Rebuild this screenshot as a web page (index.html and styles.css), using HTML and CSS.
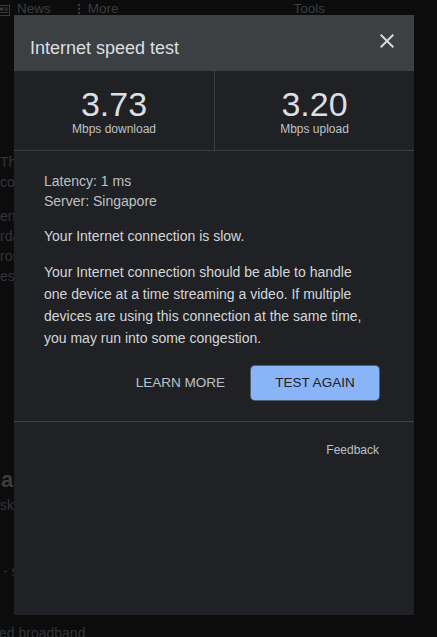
FILE: index.html
```html
<!DOCTYPE html>
<html lang="en">
<head>
<meta charset="utf-8">
<title>Internet speed test</title>
<link rel="stylesheet" href="styles.css">
</head>
<body>
<div class="page">
  <nav class="tabs">
    <span class="tab tab-news">
      <svg class="news-icon" width="12" height="11" viewBox="0 0 12 11"><rect x="0.5" y="0.5" width="11" height="10" fill="none" stroke="#3a3d40"/><rect x="2" y="2.5" width="3" height="3" fill="#3a3d40"/><path d="M6 3h4M6 5h4M2 7.5h8" stroke="#3a3d40"/></svg>
      <span>News</span>
    </span>
    <span class="tab tab-more">
      <svg class="kebab" width="4" height="12" viewBox="0 0 4 12"><circle cx="2" cy="2" r="1.2" fill="#3a3d40"/><circle cx="2" cy="6" r="1.2" fill="#3a3d40"/><circle cx="2" cy="10" r="1.2" fill="#3a3d40"/></svg>
      <span>More</span>
    </span>
    <span class="tab tab-tools">Tools</span>
  </nav>
  <div class="snippets">
    <p class="snip s1">The</p>
    <p class="snip">con</p>
    <p class="snip s2">ens</p>
    <p class="snip">rda</p>
    <p class="snip">ros</p>
    <p class="snip">esm</p>
    <p class="snip snip-title">a</p>
    <p class="snip s3">sk</p>
    <p class="snip s4">- s</p>
    <p class="snip s5">ed broadband</p>
  </div>
</div>

<div class="dialog" role="dialog" aria-label="Internet speed test">
  <header class="dialog-head">
    <h1 class="dialog-title">Internet speed test</h1>
    <button class="close" aria-label="Close">
      <svg width="24" height="24" viewBox="0 0 24 24"><path d="M19 6.41L17.59 5 12 10.59 6.41 5 5 6.41 10.59 12 5 17.59 6.41 19 12 13.41 17.59 19 19 17.59 13.41 12z" fill="#d6d8db"/></svg>
    </button>
  </header>
  <div class="stats">
    <div class="stat">
      <div class="stat-value">3.73</div>
      <div class="stat-label">Mbps download</div>
    </div>
    <div class="stat">
      <div class="stat-value">3.20</div>
      <div class="stat-label">Mbps upload</div>
    </div>
  </div>
  <div class="content">
    <div class="meta">
      <div>Latency: 1 ms</div>
      <div>Server: Singapore</div>
    </div>
    <p class="text">Your Internet connection is slow.</p>
    <p class="text para">Your Internet connection should be able to handle one device at a time streaming a video. If multiple devices are using this connection at the same time, you may run into some congestion.</p>
    <div class="actions">
      <button class="btn btn-text">LEARN MORE</button>
      <button class="btn btn-primary">TEST AGAIN</button>
    </div>
  </div>
  <div class="footer">
    <span class="feedback">Feedback</span>
  </div>
</div>
</body>
</html>
```

FILE: styles.css
```css
html, body {
  margin: 0;
  padding: 0;
}
body {
  background: #0c0c0d;
  width: 437px;
  height: 637px;
  overflow: hidden;
  position: relative;
  font-family: "Liberation Sans", Arial, sans-serif;
}

/* background page (dimmed) */
.page {
  color: #35373a;
}
.tabs {
  display: flex;
  align-items: center;
  height: 16px;
  padding-top: 1px;
  font-size: 13.5px;
  line-height: 16px;
  color: #3a3d40;
}
.tab {
  display: flex;
  align-items: center;
}
.tab-news {
  margin-left: -2px;
  gap: 7px;
}
.news-icon {
  margin-top: 2px;
}
.tab-more {
  margin-left: 26px;
  gap: 7px;
}
.tab-tools {
  margin-left: 175px;
}
.snippets {
  font-size: 14px;
  line-height: 20px;
  color: #333538;
}
.snip {
  margin: 0;
  white-space: nowrap;
}
.s1 { margin-top: 135px; }
.s2 { margin-top: 14px; }
.snip-title {
  margin-top: 180px;
  font-size: 22px;
  line-height: 28px;
  font-weight: bold;
  color: #3a3c3f;
  margin-left: 1px;
}
.s3 { margin-top: 1px; }
.s4 { margin-top: 46px; margin-left: 3px; }
.s5 { margin-top: 42px; margin-left: -1px; }

/* dialog overlay */
.dialog {
  position: absolute;
  top: 15px;
  left: 14px;
  width: 400px;
  height: 600px;
  background: #202124;
  display: flex;
  flex-direction: column;
}
.dialog-head {
  height: 56px;
  background: #3c4043;
  display: flex;
  justify-content: space-between;
  align-items: flex-start;
  padding: 0 15px 0 16px;
  box-sizing: border-box;
}
.dialog-title {
  margin: 21px 0 0;
  font-size: 18px;
  line-height: 24px;
  font-weight: normal;
  color: #dcdee1;
}
.close {
  margin-top: 14px;
  width: 24px;
  height: 24px;
  padding: 0;
  border: 0;
  background: none;
  display: block;
}
.close svg {
  display: block;
}

.stats {
  display: grid;
  grid-template-columns: 1fr 1fr;
  border-bottom: 1px solid #3c4043;
}
.stat {
  padding: 16px 0 13px;
  text-align: center;
}
.stat + .stat {
  border-left: 1px solid #3c4043;
}
.stat-value {
  font-size: 34px;
  line-height: 34px;
  color: #dcdee1;
}
.stat-label {
  font-size: 12px;
  line-height: 16px;
  color: #bdc1c6;
}

.content {
  padding: 20px 35px 21px 30px;
  border-bottom: 1px solid #3c4043;
}
.meta {
  font-size: 14px;
  line-height: 20px;
  color: #bdc1c6;
  margin-bottom: 14px;
}
.text {
  margin: 0 0 14px;
  font-size: 14px;
  line-height: 22px;
  color: #d4d6d9;
}
.para {
  margin: 0;
  padding-right: 3px;
}
.actions {
  margin-top: 17px;
  display: flex;
  justify-content: flex-end;
  align-items: center;
}
.btn {
  height: 34px;
  padding: 0 24px;
  border: 0;
  border-radius: 4px;
  font-family: "Liberation Sans", Arial, sans-serif;
  font-size: 13.5px;
  line-height: 34px;
  background: none;
}
.btn-text {
  color: #bdc1c6;
  margin-right: 2px;
}
.btn-primary {
  width: 128px;
  padding: 0;
  background: #8ab4f8;
  color: #202124;
  box-shadow: 0 0 0 1px #4d5f7a;
}

.footer {
  padding: 20px 35px 0 30px;
  display: flex;
  justify-content: flex-end;
}
.feedback {
  font-size: 12px;
  line-height: 16px;
  color: #bdc1c6;
}
```
